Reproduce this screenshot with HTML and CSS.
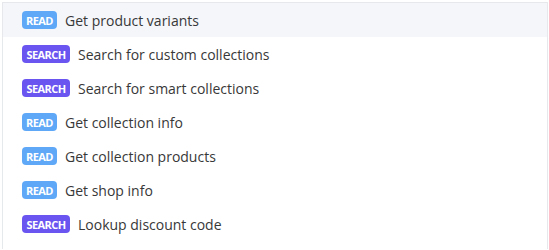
FILE: index.html
```
<!DOCTYPE html>
<html>
<head>
<meta charset="utf-8">
<link rel="stylesheet" href="styles.css">
</head>
<body>
<div class="panel">
  <div class="row active"><span class="badge read">READ</span><span class="label">Get product variants</span></div>
  <div class="row"><span class="badge search">SEARCH</span><span class="label">Search for custom collections</span></div>
  <div class="row"><span class="badge search">SEARCH</span><span class="label">Search for smart collections</span></div>
  <div class="row"><span class="badge read">READ</span><span class="label">Get collection info</span></div>
  <div class="row"><span class="badge read">READ</span><span class="label">Get collection products</span></div>
  <div class="row"><span class="badge read">READ</span><span class="label">Get shop info</span></div>
  <div class="row"><span class="badge search">SEARCH</span><span class="label">Lookup discount code</span></div>
</div>
</body>
</html>
```
FILE: styles.css
```
html, body {
  margin: 0;
  padding: 0;
  background: #ffffff;
}
body {
  font-family: "Open Sans", "Noto Sans", sans-serif;
}
.panel {
  margin: 2px 1px 0 2px;
  border: 1px solid #e6e8ec;
  border-bottom: none;
  height: 247px;
  background: #ffffff;
  box-sizing: border-box;
}
.row {
  height: 34px;
  display: flex;
  align-items: center;
  padding-left: 19px;
  gap: 8px;
}
.row.active {
  background: #f4f6fa;
}
.badge {
  display: inline-flex;
  align-items: center;
  justify-content: center;
  height: 18px;
  padding: 0 3px;
  border-radius: 4px;
  color: #ffffff;
  font-size: 11px;
  font-weight: 700;
  letter-spacing: -0.6px;
  box-sizing: border-box;
}
.badge.read {
  background: #5ea8f7;
  width: 35px;
}
.badge.search {
  background: #6a55f0;
  width: 48px;
}
.label {
  font-size: 14px;
  color: #383838;
}
```
